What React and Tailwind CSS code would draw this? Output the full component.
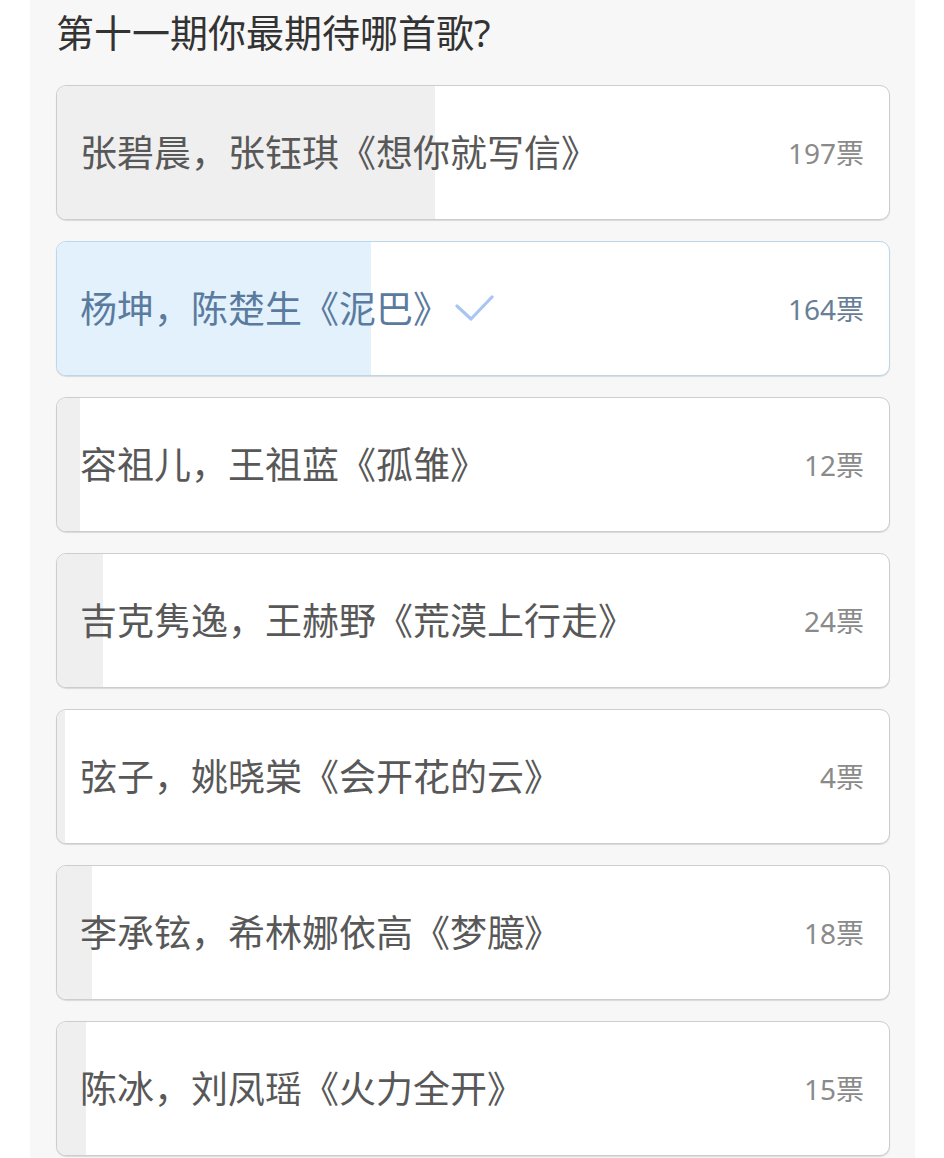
const options = [
  { label: "张碧晨，张钰琪《想你就写信》", votes: 197 },
  { label: "杨坤，陈楚生《泥巴》", votes: 164, selected: true },
  { label: "容祖儿，王祖蓝《孤雏》", votes: 12 },
  { label: "吉克隽逸，王赫野《荒漠上行走》", votes: 24 },
  { label: "弦子，姚晓棠《会开花的云》", votes: 4 },
  { label: "李承铉，希林娜依高《梦臆》", votes: 18 },
  { label: "陈冰，刘凤瑶《火力全开》", votes: 15 },
];

const total = options.reduce((sum, o) => sum + o.votes, 0);

function Check() {
  return (
    <svg width="40" height="30" viewBox="0 0 40 30" className="ml-[5px] shrink-0">
      <polyline
        points="2,12 16,25 37,3"
        fill="none"
        stroke="#a9c6f2"
        strokeWidth="3.2"
        strokeLinecap="round"
        strokeLinejoin="round"
      />
    </svg>
  );
}

function OptionCard({ label, votes, selected }) {
  const pct = (votes / total) * 100;
  return (
    <div
      className={`relative flex h-[135px] items-center overflow-hidden rounded-[10px] border-[1.5px] bg-white shadow-[0_1px_1px_rgba(0,0,0,0.12)] ${
        selected ? "border-[#bcd6ea]" : "border-[#cdcdcd]"
      }`}
    >
      <div
        className={`absolute inset-y-0 left-0 ${selected ? "bg-[#e3f1fc]" : "bg-[#efefef]"}`}
        style={{ width: `${pct}%` }}
      />
      <div className="relative flex w-full items-center pl-[23px] pr-[25px]">
        <span
          className={`text-[37px] leading-none ${selected ? "text-[#5a7b9e]" : "text-[#585858]"}`}
        >
          {label}
        </span>
        {selected && <Check />}
        <span
          className={`ml-auto text-[28px] leading-none ${selected ? "text-[#687e96]" : "text-[#8a8a8a]"}`}
        >
          {votes}票
        </span>
      </div>
    </div>
  );
}

export default function App() {
  return (
    <div
      className="h-[1158px] w-[944px] overflow-hidden bg-white"
      style={{ fontFamily: '"Noto Sans", "Noto Sans CJK SC", sans-serif' }}
    >
      <div className="ml-[30px] h-full w-[885px] bg-[#f7f7f7] pl-[26px] pr-[25px]">
        <div className="flex h-[85px] items-start pt-[9px]">
          <h1 className="text-[38px] leading-[46px] font-normal text-[#333333]">
            第十一期你最期待哪首歌?
          </h1>
        </div>
        <div className="flex flex-col gap-[21px]">
          {options.map((o) => (
            <OptionCard key={o.label} {...o} />
          ))}
        </div>
      </div>
    </div>
  );
}
